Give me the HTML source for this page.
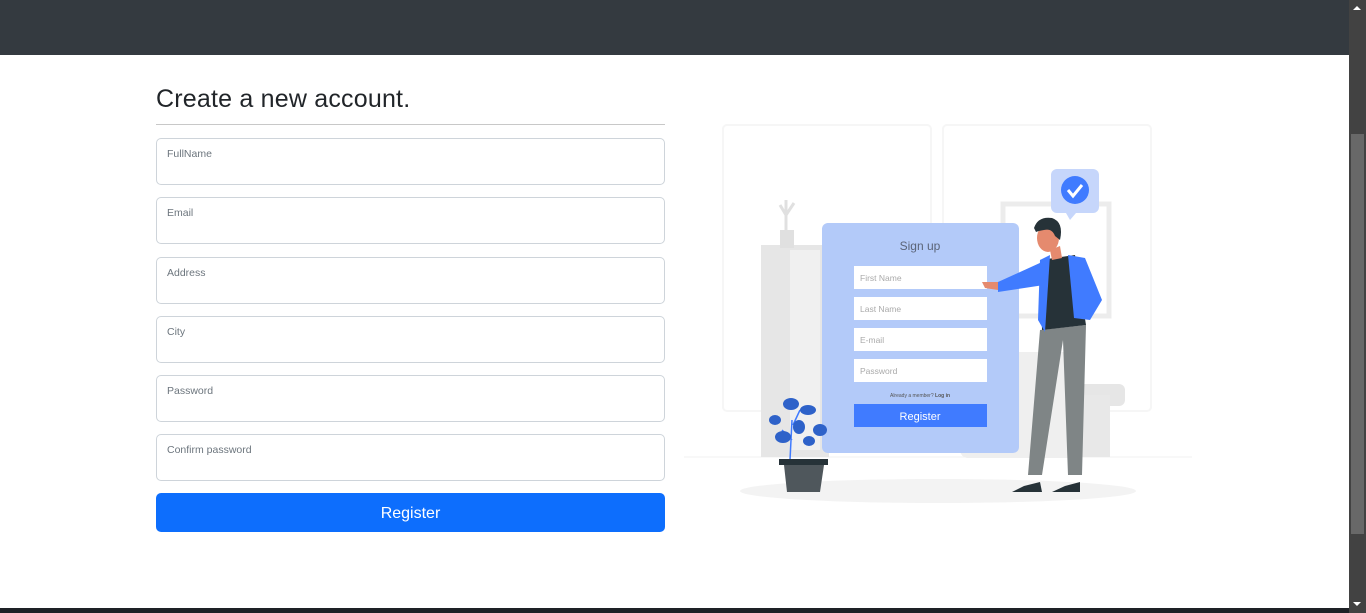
<!DOCTYPE html>
<html><head><meta charset="utf-8"><style>
*{box-sizing:border-box;margin:0;padding:0}
body{width:1366px;height:613px;overflow:hidden;background:#fff;font-family:"Liberation Sans",sans-serif;position:relative}
.hdr{position:absolute;left:0;top:0;width:1349px;height:55px;background:#343a40}
.sb{position:absolute;left:1349px;top:0;width:17px;height:613px;background:#424242}
.thumb{position:absolute;left:1351px;top:134px;width:13px;height:400px;background:#686868}
.bot{position:absolute;left:0;top:608px;width:1349px;height:5px;background:#1e2126}
h2{position:absolute;left:156px;top:85px;font-size:25px;font-weight:400;color:#212529;letter-spacing:.2px}
.hr{position:absolute;left:156px;top:124px;width:509px;height:1px;background:#c8c8c8}
.in{position:absolute;left:156px;width:509px;height:47px;border:1px solid #ced4da;border-radius:5px;background:#fff}
.in span{position:absolute;left:10px;top:9px;font-size:10.5px;color:#6c757d}
.btn{position:absolute;left:156px;top:493px;width:509px;height:39px;background:#0d6efd;border-radius:5px;color:#fff;font-size:16px;text-align:center;line-height:41px}
svg{position:absolute;left:680px;top:110px}
</style></head><body>
<div class="hdr"></div>
<h2>Create a new account.</h2>
<div class="hr"></div>
<div class="in" style="top:138px"><span>FullName</span></div>
<div class="in" style="top:197px"><span>Email</span></div>
<div class="in" style="top:257px"><span>Address</span></div>
<div class="in" style="top:316px"><span>City</span></div>
<div class="in" style="top:375px"><span>Password</span></div>
<div class="in" style="top:434px"><span>Confirm password</span></div>
<div class="btn">Register</div>
<svg width="520" height="400" viewBox="680 110 520 400">
<rect x="723" y="125" width="208" height="286" rx="4" fill="none" stroke="#f6f6f6" stroke-width="2"/>
<rect x="943" y="125" width="208" height="286" rx="4" fill="none" stroke="#f6f6f6" stroke-width="2"/>
<line x1="684" y1="457" x2="1192" y2="457" stroke="#f2f2f2"/>
<ellipse cx="938" cy="491" rx="198" ry="12" fill="#f3f3f3"/>
<rect x="761" y="245" width="68" height="212" fill="#e6e6e6"/>
<rect x="790" y="250" width="30" height="200" fill="#f0f0f0"/>
<rect x="780" y="230" width="14" height="18" fill="#e0e0e0"/>
<path d="M786 230 L786 200 M786 215 L780 205 M786 215 L794 203" stroke="#e0e0e0" stroke-width="3" fill="none"/>
<rect x="1003" y="204" width="106" height="112" fill="none" stroke="#ececec" stroke-width="5"/>
<rect x="960" y="352" width="120" height="106" rx="8" fill="#efefef"/>
<rect x="1075" y="384" width="50" height="22" rx="6" fill="#e6e6e6"/>
<rect x="1070" y="395" width="40" height="62" fill="#e8e8e8"/>
<rect x="822" y="223" width="197" height="230" rx="6" fill="#b3caf9"/>
<text x="920" y="250" font-size="12" fill="#5b6478" text-anchor="middle" font-family="Liberation Sans">Sign up</text>
<rect x="854" y="266" width="133" height="23" fill="#fff"/>
<rect x="854" y="297" width="133" height="23" fill="#fff"/>
<rect x="854" y="328" width="133" height="23" fill="#fff"/>
<rect x="854" y="359" width="133" height="23" fill="#fff"/>
<g font-size="8.5" fill="#aaa" font-family="Liberation Sans"><text x="860" y="281">First Name</text><text x="860" y="312">Last Name</text><text x="860" y="343">E-mail</text><text x="860" y="374">Password</text></g>
<text x="920" y="397" font-size="5" fill="#555" text-anchor="middle" font-family="Liberation Sans">Already a member? <tspan font-weight="bold">Log in</tspan></text>
<rect x="854" y="404" width="133" height="23" fill="#407bff"/>
<text x="920" y="420" font-size="11" fill="#fff" text-anchor="middle" font-family="Liberation Sans">Register</text>
<path d="M790 460 L792 420 M792 440 L782 430 M793 425 L800 410" stroke="#407bff" stroke-width="1.5" fill="none"/>
<g fill="#2e62c9"><ellipse cx="791" cy="404" rx="8" ry="6"/><ellipse cx="808" cy="410" rx="8" ry="5"/><ellipse cx="783" cy="437" rx="8" ry="6"/><ellipse cx="820" cy="430" rx="7" ry="6"/><ellipse cx="799" cy="427" rx="6" ry="7"/><ellipse cx="775" cy="420" rx="6" ry="5"/><ellipse cx="809" cy="441" rx="6" ry="5"/></g>
<rect x="779" y="459" width="49" height="6" fill="#263238"/>
<path d="M784 465 L824 465 L820 492 L787 492 Z" fill="#4f575c"/>
<rect x="1051" y="169" width="48" height="44" rx="6" fill="#c6d6fb"/>
<path d="M1066 213 L1070 220 L1076 213 Z" fill="#c6d6fb"/>
<circle cx="1075" cy="190" r="14" fill="#407bff"/>
<path d="M1068 190 L1073 196 L1082 185" stroke="#fff" stroke-width="3" fill="none"/>
<path d="M1040 330 L1028 475 L1042 475 L1063 340 L1068 475 L1082 475 L1086 325 Z" fill="#7f8586"/>
<path d="M1024 486 L1040 482 L1042 492 L1012 492 Z" fill="#263238"/>
<path d="M1065 486 L1080 482 L1080 492 L1052 492 Z" fill="#263238"/>
<path d="M1040 260 L1075 255 L1086 325 L1042 330 Z" fill="#263238"/>
<path d="M1040 260 L1050 255 L1045 332 L1038 320 Z" fill="#407bff"/>
<path d="M1068 255 L1085 258 L1102 300 L1090 320 L1074 318 Z" fill="#407bff"/>
<path d="M1042 262 L998 282 L998 292 L1044 285 Z" fill="#407bff"/>
<path d="M982 282 L998 282 L998 290 L985 288 Z" fill="#e58a6e"/>
<path d="M1050 250 L1052 260 L1062 258 L1060 246 Z" fill="#e58a6e"/>
<ellipse cx="1048" cy="238" rx="11" ry="14" fill="#e58a6e"/>
<path d="M1034 228 Q1038 216 1052 218 Q1064 222 1060 240 L1055 236 Q1052 228 1044 230 Q1038 231 1036 232 Z" fill="#263238"/>
</svg>
<div class="sb"></div>
<div class="thumb"></div>
<div style="position:absolute;left:1353px;top:6px;width:0;height:0;border-left:4px solid transparent;border-right:4px solid transparent;border-bottom:4px solid #fff"></div>
<div style="position:absolute;left:1353px;top:602px;width:0;height:0;border-left:4px solid transparent;border-right:4px solid transparent;border-top:4px solid #fff"></div>
<div class="bot"></div>
</body></html>
